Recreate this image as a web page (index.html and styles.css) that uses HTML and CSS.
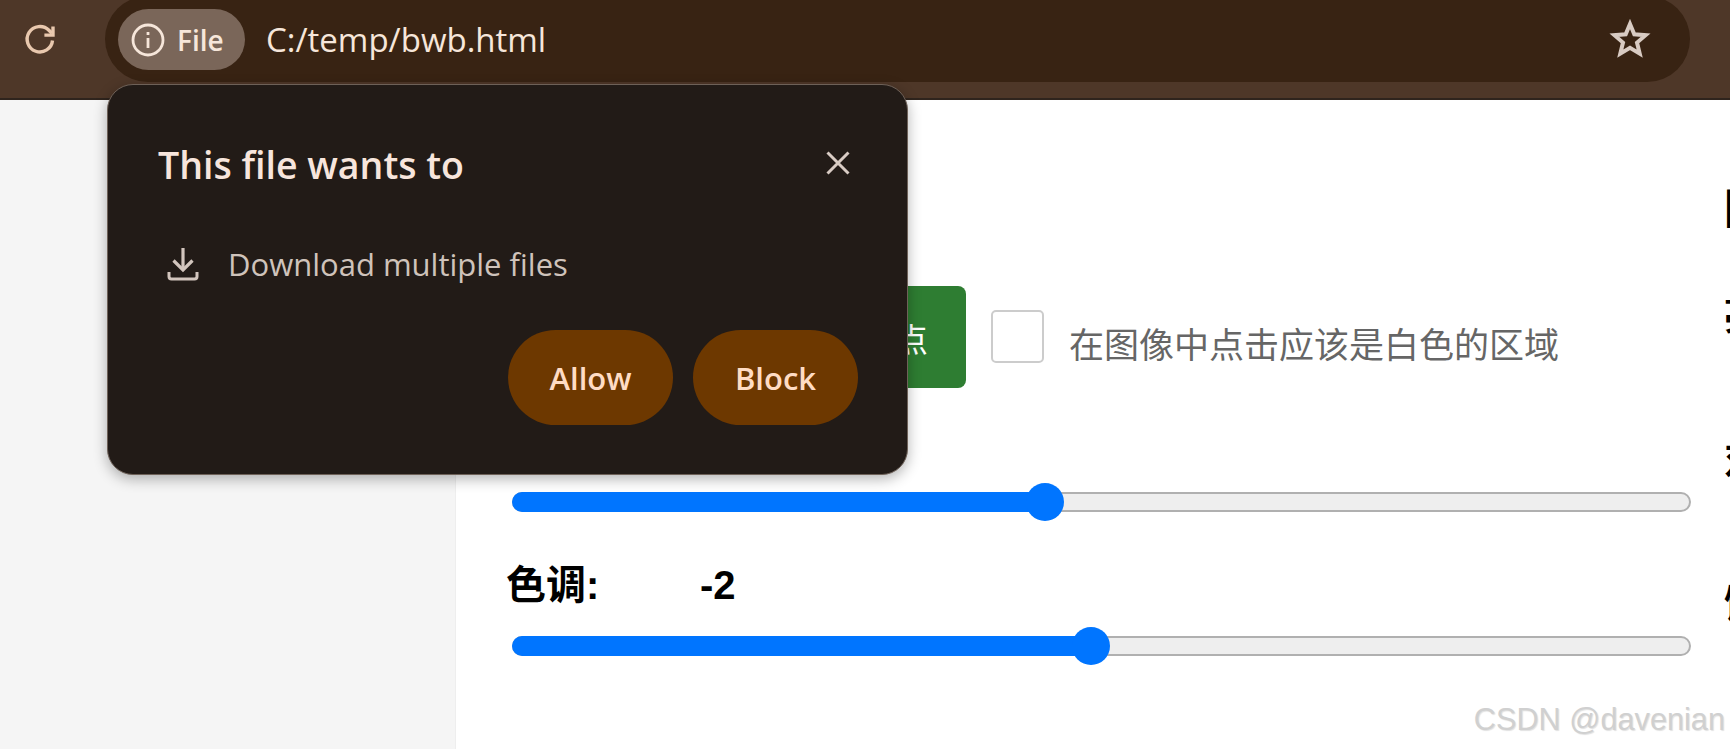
FILE: index.html
```html
<!DOCTYPE html>
<html>
<head>
    <title>bwb.html</title>
    <link rel="stylesheet" href="styles.css">
</head>
<body>
    <div class="toolbar">
        <button class="reload-btn">
            <svg width="36" height="36" viewBox="0 0 36 36" fill="none" stroke="#e9c8ae" stroke-width="3.4">
                <path d="M30.5 19.500a12.700 12.700 0 1 1-3.600-10.200l3 3"/>
                <path d="M31 5.500v8.600h-8.600"/>
            </svg>
        </button>
        <div class="omnibox">
            <div class="site-chip">
                <svg width="34" height="34" viewBox="0 0 34 34" fill="none" stroke="#f6e6da" stroke-width="2.8">
                    <circle cx="17" cy="17" r="15"/>
                    <path d="M17 15v10"/>
                    <path d="M17 9v3"/>
                </svg>
                <span>File</span>
            </div>
            <span class="url">C:/temp/bwb.html</span>
            <svg class="star" width="42" height="42" viewBox="0 0 42 42" fill="none" stroke="#d8cbc3" stroke-width="4">
                <polygon points="21,6 25.300,16.300 36.600,17.200 28,24.600 30.700,35.600 21,29.800 11.300,35.600 14,24.600 5.400,17.200 16.700,16.300"/>
            </svg>
        </div>
    </div>

    <div class="page">
        <div class="sidebar"></div>
        <div class="controls">
            <div class="white-row">
                <button class="green-btn">取白点</button>
                <div class="checkbox"></div>
                <span class="hint">在图像中点击应该是白色的区域</span>
            </div>
            <div class="slider first">
                <div class="slider-fill" style="width: 45.2%"></div>
                <div class="slider-thumb" style="left: 45.2%"></div>
            </div>
            <div class="slider-label">
                <span class="slider-name">色调:</span>
                <span>-2</span>
            </div>
            <div class="slider">
                <div class="slider-fill" style="width: 49.1%"></div>
                <div class="slider-thumb" style="left: 49.1%"></div>
            </div>
        </div>
        <div class="side-column">
            <h2>图像</h2>
            <p class="row-one">亮度</p>
            <p class="row-two">对比度</p>
            <p class="row-three">饱和度</p>
        </div>
    </div>

    <div class="popup">
        <div class="popup-head">
            <h3>This file wants to</h3>
            <svg width="26" height="26" viewBox="0 0 26 26" fill="none" stroke="#d9ccc4" stroke-width="3">
                <path d="M2.500 2.500l21 21M23.500 2.500l-21 21"/>
            </svg>
        </div>
        <div class="popup-item">
            <svg width="32" height="34" viewBox="0 0 32 34" fill="none" stroke="#d2c5bd" stroke-width="3.2">
                <path d="M16 1v21"/>
                <path d="M6.500 13.500L16 23l9.500-9.500"/>
                <path d="M2 25v4.500a2.500 2.500 0 0 0 2.500 2.500h23a2.500 2.500 0 0 0 2.500-2.500V25" stroke-width="3"/>
            </svg>
            <span>Download multiple files</span>
        </div>
        <div class="popup-actions">
            <button class="perm-btn">Allow</button>
            <button class="perm-btn">Block</button>
        </div>
    </div>

    <div class="watermark">CSDN @davenian</div>
</body>
</html>
```

FILE: styles.css
```css
html, body {
    height: 100%;
}
body {
    margin: 0;
    overflow: hidden;
    position: relative;
    background: #fff;
    font-family: "Liberation Sans", "Noto Sans CJK SC", sans-serif;
    display: flex;
    flex-direction: column;
}
button {
    border: none;
    font-family: inherit;
    padding: 0;
}

/* browser toolbar */
.toolbar {
    height: 98px;
    flex-shrink: 0;
    background: #4e3728;
    border-bottom: 2px solid #2f241d;
    padding-left: 22px;
    display: flex;
    align-items: flex-start;
}
.reload-btn {
    width: 36px;
    height: 36px;
    margin-top: 21px;
    margin-right: 47px;
    background: none;
}
.omnibox {
    width: 1585px;
    height: 86px;
    margin-top: -4px;
    box-sizing: border-box;
    padding: 13px 39px 0 13px;
    border-radius: 43px;
    background: #382313;
    display: flex;
    align-items: flex-start;
}
.site-chip {
    width: 127px;
    height: 61px;
    box-sizing: border-box;
    padding-left: 13px;
    border-radius: 31px;
    background: #7a6659;
    display: flex;
    align-items: center;
    gap: 12px;
    color: #f6e6da;
    font-family: "Open Sans", sans-serif;
    font-size: 28px;
    font-weight: 600;
}
.url {
    margin-left: 21px;
    line-height: 61px;
    color: #f6e6da;
    font-family: "Open Sans", sans-serif;
    font-size: 33px;
}
.star {
    margin-left: auto;
    margin-top: 9px;
}

/* page under the toolbar */
.page {
    flex: 1;
    display: flex;
    min-height: 0;
}
.sidebar {
    width: 455px;
    flex-shrink: 0;
    background: #f5f5f5;
    border-right: 1px solid #eee;
}
.controls {
    width: 1179px;
    flex-shrink: 0;
    margin-left: 56px;
}
.white-row {
    margin-top: 186px;
    display: flex;
    align-items: center;
}
.green-btn {
    width: 175px;
    height: 102px;
    margin-left: 279px;
    padding: 2px 38px 0 0;
    border-radius: 8px;
    background: #2e7d32;
    color: #fff;
    font-size: 33px;
    text-align: right;
}
.checkbox {
    width: 49px;
    height: 49px;
    margin-left: 25px;
    margin-top: -2px;
    border: 2px solid #ccc;
    border-radius: 5px;
}
.hint {
    margin-left: 25px;
    margin-top: 10px;
    color: #666;
    font-size: 35px;
}
.slider {
    position: relative;
    height: 16px;
    border: 2px solid #b0b0b0;
    border-radius: 10px;
    background: #eee;
}
.slider.first {
    margin-top: 104px;
}
.slider-fill {
    height: 20px;
    margin: -2px;
    border-radius: 10px;
    background: #0075ff;
}
.slider-thumb {
    position: absolute;
    top: -11px;
    width: 38px;
    height: 38px;
    margin-left: -19px;
    border-radius: 50%;
    background: #0075ff;
}
.slider-label {
    display: flex;
    margin: 48px 0 0 -6px;
    height: 76px;
    font-size: 40px;
    line-height: 50px;
    font-weight: bold;
    color: #000;
}
.slider-name {
    width: 194px;
}
.side-column {
    margin-left: 33px;
    flex-shrink: 0;
    width: 200px;
    font-weight: bold;
    font-size: 38px;
    color: #000;
}
.side-column h2 {
    margin: 85px 0 0;
    font-size: 42px;
    line-height: 50px;
}
.side-column p {
    margin: 0;
    line-height: 44px;
}
.side-column .row-one {
    margin-top: 59px;
}
.side-column .row-two {
    margin-top: 100px;
}
.side-column .row-three {
    margin-top: 100px;
}

/* permission bubble */
.popup {
    position: absolute;
    left: 107px;
    top: 84px;
    width: 801px;
    height: 391px;
    box-sizing: border-box;
    padding: 52px 50px 0 50px;
    background: #221b17;
    border: 1px solid #6e6158;
    border-radius: 26px;
    box-shadow: 0 4px 14px rgba(0, 0, 0, 0.3);
    font-family: "Open Sans", sans-serif;
}
.popup-head {
    display: flex;
    justify-content: space-between;
    align-items: flex-start;
    padding-right: 6px;
}
.popup-head h3 {
    margin: 5px 0 0;
    color: #f7e5dc;
    font-size: 37.500px;
    font-weight: 600;
    line-height: 46px;
}
.popup-head svg {
    margin-top: 13px;
}
.popup-item {
    margin-top: 55px;
    padding-left: 9px;
    display: flex;
    align-items: center;
    gap: 29px;
    color: #cfc3bb;
    font-size: 31px;
}
.popup-actions {
    margin-top: 45px;
    margin-right: -1px;
    display: flex;
    justify-content: flex-end;
    gap: 20px;
}
.perm-btn {
    width: 165px;
    height: 95px;
    border-radius: 48px;
    background: #6d3800;
    color: #ffdcc4;
    font-family: "Open Sans", sans-serif;
    font-size: 31px;
    font-weight: 600;
}

.watermark {
    position: absolute;
    right: 5px;
    bottom: 11px;
    color: #d0d0d0;
    font-size: 30.700px;
    text-shadow: 1px 1px 1px rgba(0, 0, 0, 0.12);
}
```
